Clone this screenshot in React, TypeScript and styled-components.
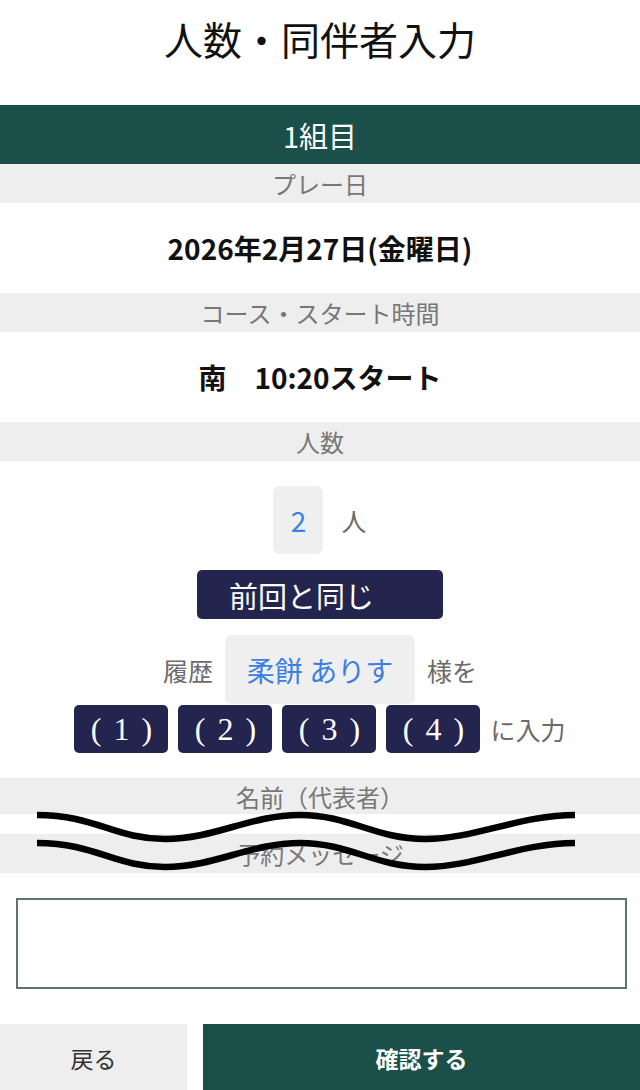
import styled, { createGlobalStyle } from 'styled-components'

const GlobalStyle = createGlobalStyle`
  body {
    margin: 0;
    background: #ffffff;
    font-family: 'Noto Sans CJK JP', 'Noto Sans', sans-serif;
  }
`

const navy = '#23254f'
const green = '#1b4f4a'
const band = '#eeeeee'

const Page = styled.div`
  width: 640px;
  display: flex;
  flex-direction: column;
`

const Header = styled.h1`
  margin: 0;
  height: 105px;
  box-sizing: border-box;
  padding-top: 12px;
  text-align: center;
  font-size: 39px;
  line-height: 52px;
  font-weight: 400;
  color: #111;
`

const GroupBar = styled.div`
  height: 59px;
  background: ${green};
  color: #fff;
  font-size: 29px;
  display: flex;
  align-items: center;
  justify-content: center;
`

const LabelBand = styled.div<{ h?: number }>`
  height: ${(p) => p.h ?? 39}px;
  background: ${band};
  color: #777;
  font-size: 24px;
  display: flex;
  align-items: center;
  justify-content: center;
`

const ValueRow = styled.div`
  height: 90px;
  display: flex;
  align-items: center;
  justify-content: center;
  font-size: 28px;
  font-weight: 700;
  color: #111;
  white-space: pre;
`

const PeopleSection = styled.div`
  padding: 25px 0 25px;
  display: flex;
  flex-direction: column;
  align-items: center;
`

const InlineRow = styled.div<{ gap: number; top?: number }>`
  display: flex;
  align-items: center;
  justify-content: center;
  gap: ${(p) => p.gap}px;
  margin-top: ${(p) => p.top ?? 0}px;
`

const SelectBox = styled.div<{ w: number; h: number }>`
  width: ${(p) => p.w}px;
  height: ${(p) => p.h}px;
  border-radius: 7px;
  background: #efefef;
  color: #3a7fe3;
  font-size: 28px;
  display: flex;
  align-items: center;
  justify-content: center;
  white-space: pre;
`

const Muted = styled.span`
  color: #6b6b6b;
  font-size: 25px;
`

const NavyButton = styled.button<{ w: number; h: number }>`
  width: ${(p) => p.w}px;
  height: ${(p) => p.h}px;
  border: none;
  border-radius: 5px;
  background: ${navy};
  color: #fff;
  font-family: 'Liberation Serif', 'Noto Sans CJK JP', serif;
  display: flex;
  align-items: center;
  padding: 0;
`

const SameButton = styled(NavyButton)`
  margin-top: 16px;
  font-size: 29px;
  padding-left: 32px;
  justify-content: flex-start;
`

const SlotButton = styled(NavyButton)`
  font-size: 32px;
  letter-spacing: 12px;
  padding-left: 12px;
  justify-content: center;
`

const BreakArea = styled.div`
  position: relative;
  display: flex;
  flex-direction: column;
`

const Gap = styled.div<{ h: number }>`
  height: ${(p) => p.h}px;
`

const Waves = styled.svg`
  position: absolute;
  left: 0;
  top: 0;
  width: 640px;
  height: 100px;
  pointer-events: none;
`

const MessageBox = styled.textarea`
  display: block;
  margin: 25px 13px 0 16px;
  width: 611px;
  height: 91px;
  box-sizing: border-box;
  border: 2px solid #5e7471;
  border-radius: 0;
  resize: none;
  outline: none;
`

const Footer = styled.div`
  margin-top: 35px;
  height: 67px;
  display: flex;
  gap: 16px;
`

const FooterButton = styled.button<{ primary?: boolean }>`
  border: none;
  padding: 0;
  flex: ${(p) => (p.primary ? 1 : '0 0 187px')};
  background: ${(p) => (p.primary ? green : band)};
  color: ${(p) => (p.primary ? '#fff' : '#333')};
  font-family: 'Liberation Serif', 'Noto Sans CJK JP', serif;
  font-size: 23px;
  font-weight: ${(p) => (p.primary ? 700 : 400)};
`

// break marks: two wavy strokes over the cut-out part of the form
const wave = (y: number) =>
  `M37,${y} C95,${y} 115,${y + 24} 165,${y + 24} S250,${y} 300,${y} S375,${y + 24} 425,${y + 24} S520,${y} 575,${y}`

export default function App() {
  return (
    <>
      <GlobalStyle />
      <Page>
        <Header>人数・同伴者入力</Header>
        <GroupBar>1組目</GroupBar>
        <LabelBand>プレー日</LabelBand>
        <ValueRow>2026年2月27日(金曜日)</ValueRow>
        <LabelBand>コース・スタート時間</LabelBand>
        <ValueRow>南　10:20スタート</ValueRow>
        <LabelBand>人数</LabelBand>
        <PeopleSection>
          <InlineRow gap={18}>
            <SelectBox w={50} h={68}>2</SelectBox>
            <Muted>人</Muted>
          </InlineRow>
          <SameButton w={246} h={49}>前回と同じ</SameButton>
          <InlineRow gap={12} top={16}>
            <Muted>履歴</Muted>
            <SelectBox w={190} h={69}>柔餅 ありす</SelectBox>
            <Muted>様を</Muted>
          </InlineRow>
          <InlineRow gap={10} top={1}>
            {['(1)', '(2)', '(3)', '(4)'].map((s) => (
              <SlotButton key={s} w={94} h={48}>
                {s}
              </SlotButton>
            ))}
            <Muted>に入力</Muted>
          </InlineRow>
        </PeopleSection>
        <BreakArea>
          <LabelBand h={36}>名前（代表者）</LabelBand>
          <Gap h={20} />
          <LabelBand>予約メッセージ</LabelBand>
          <Waves viewBox="0 0 640 100">
            <path d={wave(37)} fill="none" stroke="#000" strokeWidth={6.5} />
            <path d={wave(65)} fill="none" stroke="#000" strokeWidth={6.5} />
          </Waves>
        </BreakArea>
        <MessageBox />
        <Footer>
          <FooterButton>戻る</FooterButton>
          <FooterButton primary>確認する</FooterButton>
        </Footer>
      </Page>
    </>
  )
}
